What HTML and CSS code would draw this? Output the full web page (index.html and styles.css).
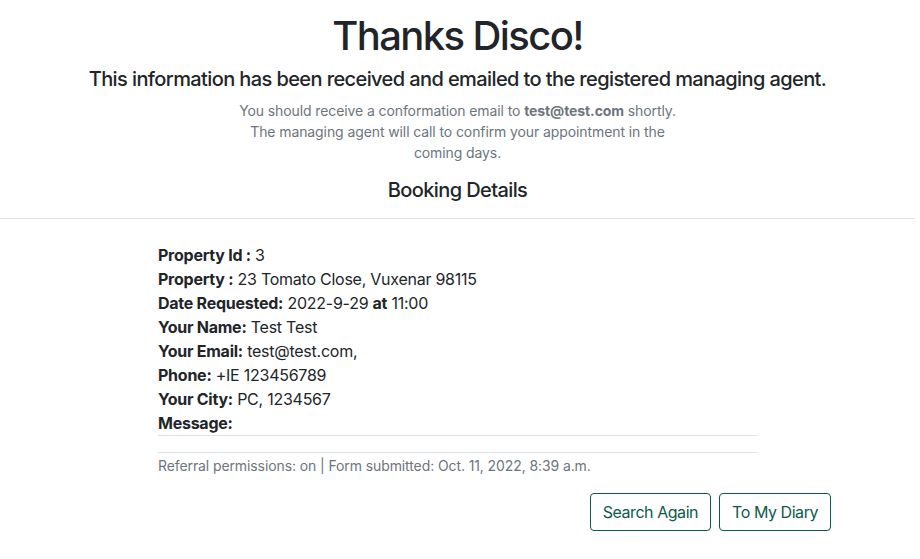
FILE: index.html
```html
<!DOCTYPE html>
<html lang="en">
<head>
<meta charset="utf-8">
<title>Thanks</title>
<link rel="stylesheet" href="styles.css">
</head>
<body>
<header class="intro">
  <h1 class="title">Thanks Disco!</h1>
  <h2 class="lead">This information has been received and emailed to the registered managing agent.</h2>
  <p class="note">You should receive a conformation email to <strong>test@test.com</strong> shortly. The managing agent will call to confirm your appointment in the coming days.</p>
  <h3 class="section-title">Booking Details</h3>
</header>
<hr class="divider">
<main class="details">
  <div class="fields">
    <p><strong>Property Id :</strong> 3</p>
    <p><strong>Property :</strong> 23 Tomato Close, Vuxenar 98115</p>
    <p><strong>Date Requested:</strong> 2022-9-29 <strong>at</strong> 11:00</p>
    <p><strong>Your Name:</strong> Test Test</p>
    <p><strong>Your Email:</strong> test@test.com,</p>
    <p><strong>Phone:</strong> +IE 123456789</p>
    <p><strong>Your City:</strong> PC, 1234567</p>
    <p><strong>Message:</strong></p>
  </div>
  <p class="meta">Referral permissions: on | Form submitted: Oct. 11, 2022, 8:39 a.m.</p>
</main>
<div class="actions">
  <a class="btn" href="#">Search Again</a>
  <a class="btn" href="#">To My Diary</a>
</div>
</body>
</html>
```
FILE: styles.css
```css
html, body {
  margin: 0;
  padding: 0;
}
body {
  width: 915px;
  font-family: Inter, "Noto Sans", sans-serif;
  color: #212529;
  background: #fff;
  font-size: 16px;
  line-height: 1.5;
}
.intro {
  text-align: center;
  padding-top: 12px;
}
.title {
  margin: 0;
  font-size: 40px;
  font-weight: 500;
  line-height: 1.2;
  letter-spacing: -1.6px;
}
.lead {
  margin: 7px 0 0;
  font-size: 20px;
  font-weight: 500;
  line-height: 1.2;
  letter-spacing: -0.6px;
}
.note {
  margin: 9px auto 0;
  max-width: 440px;
  font-size: 14px;
  line-height: 21px;
  color: #6c757d;
  letter-spacing: -0.1px;
}
.note strong {
  font-weight: 700;
}
.section-title {
  margin: 15px 0 0;
  font-size: 20px;
  font-weight: 500;
  line-height: 1.2;
  letter-spacing: -0.6px;
}
.divider {
  margin: 16px 0 0;
  border: 0;
  border-top: 1px solid #dee2e6;
  width: 915px;
}
.details {
  width: 599px;
  margin: 24px auto 0;
}
.fields {
  border-bottom: 1px solid #dee2e6;
}
.fields p {
  margin: 0;
  line-height: 24px;
  letter-spacing: -0.25px;
}
.fields strong {
  font-weight: 700;
}
.meta {
  margin: 16px 0 0;
  padding-top: 2px;
  border-top: 1px solid #dee2e6;
  font-size: 14px;
  line-height: 21px;
  color: #6c757d;
  letter-spacing: -0.1px;
}
.actions {
  display: flex;
  justify-content: flex-end;
  gap: 8px;
  width: 831px;
  margin-top: 17px;
}
.btn {
  display: inline-block;
  padding: 6px 12px;
  border: 1px solid #0b5a4c;
  border-radius: 4px;
  color: #0b5a4c;
  text-decoration: none;
  font-size: 16px;
  line-height: 24px;
  letter-spacing: -0.45px;
}
```
